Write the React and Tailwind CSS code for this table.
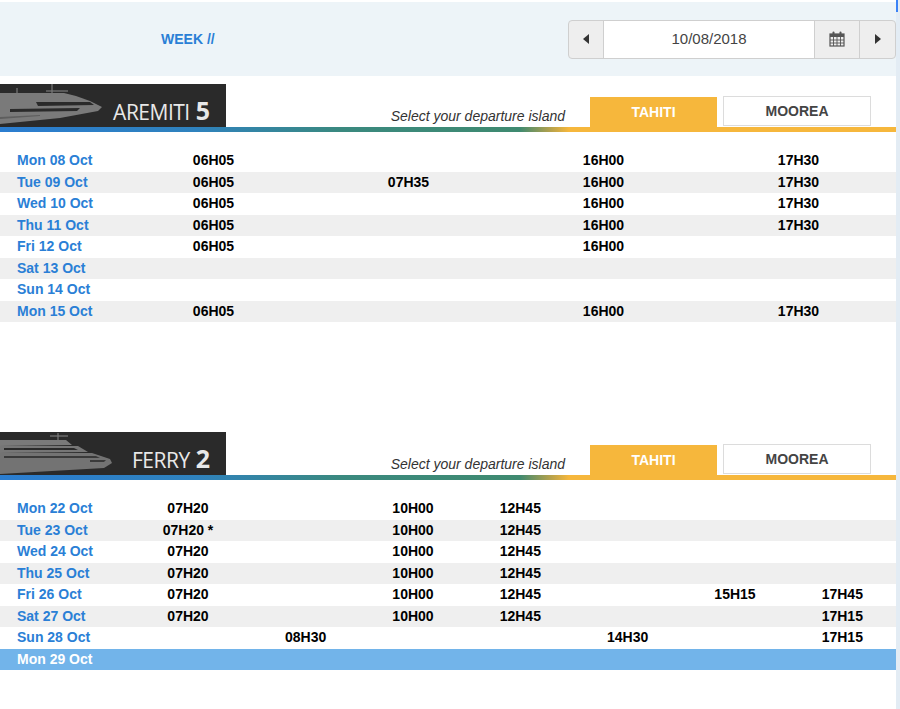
import React from 'react';

const aremitiRows = [
  ['Mon 08 Oct', '06H05', '', '16H00', '17H30'],
  ['Tue 09 Oct', '06H05', '07H35', '16H00', '17H30'],
  ['Wed 10 Oct', '06H05', '', '16H00', '17H30'],
  ['Thu 11 Oct', '06H05', '', '16H00', '17H30'],
  ['Fri 12 Oct', '06H05', '', '16H00', ''],
  ['Sat 13 Oct', '', '', '', ''],
  ['Sun 14 Oct', '', '', '', ''],
  ['Mon 15 Oct', '06H05', '', '16H00', '17H30'],
];

const ferryRows = [
  ['Mon 22 Oct', '07H20', '', '10H00', '12H45', '', '', ''],
  ['Tue 23 Oct', '07H20 *', '', '10H00', '12H45', '', '', ''],
  ['Wed 24 Oct', '07H20', '', '10H00', '12H45', '', '', ''],
  ['Thu 25 Oct', '07H20', '', '10H00', '12H45', '', '', ''],
  ['Fri 26 Oct', '07H20', '', '10H00', '12H45', '', '15H15', '17H45'],
  ['Sat 27 Oct', '07H20', '', '10H00', '12H45', '', '', '17H15'],
  ['Sun 28 Oct', '', '08H30', '', '', '14H30', '', '17H15'],
  ['Mon 29 Oct', '', '', '', '', '', '', '', true],
];

const YachtShape = () => (
  <svg width="106" height="43" viewBox="0 0 106 43">
    <line x1="17" y1="4" x2="17" y2="10" stroke="#7a7a7a" strokeWidth="1.2" />
    <line x1="52" y1="0" x2="52" y2="9" stroke="#7a7a7a" strokeWidth="1.2" />
    <line x1="46" y1="7" x2="68" y2="7" stroke="#7a7a7a" strokeWidth="1.2" />
    <path d="M0 9 L64 9 L76 12 L90 17 L102 23 L98 27 L60 34 L0 40 Z" fill="#7a7a7a" />
    <path d="M36 18 L90 18 L94 21 L38 22 Z" fill="#2a2a2a" />
    <path d="M10 25 L80 24 L77 27 L10 28 Z" fill="#2a2a2a" />
    <path d="M0 33 L40 31 L40 32 L0 35 Z" fill="#5e5e5e" />
  </svg>
);

const FerryShape = () => (
  <svg width="116" height="43" viewBox="0 0 116 43">
    <line x1="58" y1="1" x2="58" y2="8" stroke="#7a7a7a" strokeWidth="1.2" />
    <line x1="50" y1="4" x2="68" y2="4" stroke="#7a7a7a" strokeWidth="1.2" />
    <path d="M0 8 L66 8 L72 13 L0 14 Z" fill="#7a7a7a" />
    <path d="M0 14 L78 14 L88 20 L0 21 Z" fill="#767676" />
    <path d="M0 21 L92 21 L110 27 L112 31 L104 36 L0 42 Z" fill="#737373" />
    <path d="M4 16 L74 16 L78 18 L4 18 Z" fill="#2a2a2a" />
    <path d="M4 24 L96 24 L100 26 L4 26 Z" fill="#3a3a3a" />
    <path d="M90 28 L106 28 L104 30 L90 30 Z" fill="#3a3a3a" />
  </svg>
);

const Logo = ({ name, num, ship }) => (
  <div className="flex h-[43px] w-[226px] items-end bg-[#2a2a2a]">
    {ship}
    <div className="ml-auto flex items-baseline pb-[4px] pr-[16px] font-['Open_Sans',sans-serif] leading-none text-[#e8e8e8]">
      <span className="text-[21px] tracking-[-0.5px]">{name}</span>
      <span className="ml-[6px] text-[25px] font-bold">{num}</span>
    </div>
  </div>
);

const SectionHead = ({ name, num, ship }) => (
  <div>
    <div className="flex items-end">
      <Logo name={name} num={num} ship={ship} />
      <div className="flex flex-1 items-end justify-end pr-[25px]">
        <span className="mr-[25px] pb-[3px] text-[14px] italic leading-4 text-[#333]">
          Select your departure island
        </span>
        <div className="flex h-[30px] w-[127px] items-center justify-center bg-[#f6b73c] text-[14px] font-bold text-white">
          TAHITI
        </div>
        <div className="mb-[1px] ml-[6px] flex h-[30px] w-[148px] items-center justify-center border border-[#dcdcdc] bg-white text-[14px] font-bold text-[#444]">
          MOOREA
        </div>
      </div>
    </div>
    <div className="h-[5px] bg-[linear-gradient(to_right,#2b7dd0_0%,#2f82bd_22%,#3a897f_38%,#3f8a70_58%,#b7a24c_61.5%,#f6b73c_63.5%,#f6b73c_100%)]" />
  </div>
);

const Table = ({ rows, cols }) => (
  <div className="mt-[18px]">
    {rows.map((r, i) => {
      const hl = r[r.length - 1] === true;
      const cells = hl ? r.slice(0, -1) : r;
      return (
        <div
          key={i}
          className={`grid h-[21.5px] items-center ${cols} ${
            hl ? 'bg-[#72b4ea]' : i % 2 ? 'bg-[#efefef]' : 'bg-white'
          }`}
        >
          <span className={`pl-[17px] text-[14px] font-bold ${hl ? 'text-white' : 'text-[#2a7fd6]'}`}>
            {cells[0]}
          </span>
          {cells.slice(1).map((t, j) => (
            <span key={j} className="text-center text-[14px] font-bold text-black">
              {t}
            </span>
          ))}
        </div>
      );
    })}
  </div>
);

export default function App() {
  return (
    <div className="flex min-h-[709px] bg-white font-['Liberation_Sans',Arial,sans-serif]">
      <div className="w-[896px] pt-[2px]">
        <div className="flex h-[74px] items-center bg-[#edf4f8]">
          <span className="pl-[161px] text-[14px] font-bold text-[#2a7fd6]">WEEK //</span>
          <div className="ml-auto flex h-[39px] w-[328px] overflow-hidden rounded-[4px] border border-[#cfcfcf] bg-[#eeeeee]">
            <button className="flex w-[35px] items-center justify-center border-r border-[#cfcfcf]">
              <svg width="6" height="10" viewBox="0 0 6 10"><path d="M6 0 L0 5 L6 10 Z" fill="#333" /></svg>
            </button>
            <div className="flex flex-1 items-center justify-center bg-white text-[15px] text-[#444]">10/08/2018</div>
            <button className="flex w-[46px] items-center justify-center border-l border-r border-[#cfcfcf]">
              <svg width="16" height="16" viewBox="0 0 16 16">
                <rect x="1" y="3" width="14" height="12" fill="none" stroke="#555" strokeWidth="1.2" />
                <rect x="1" y="3" width="14" height="3" fill="#555" />
                <rect x="3.5" y="0.5" width="2" height="4" rx="1" fill="#555" />
                <rect x="10.5" y="0.5" width="2" height="4" rx="1" fill="#555" />
                <path d="M4.5 6 V15 M8 6 V15 M11.5 6 V15 M1 9 H15 M1 12 H15" stroke="#555" strokeWidth="0.9" />
              </svg>
            </button>
            <button className="flex w-[35px] items-center justify-center">
              <svg width="6" height="10" viewBox="0 0 6 10"><path d="M0 0 L6 5 L0 10 Z" fill="#333" /></svg>
            </button>
          </div>
        </div>

        <div className="mt-[8px]">
          <SectionHead name="AREMITI" num="5" ship={<YachtShape />} />
          <Table rows={aremitiRows} cols="grid-cols-[116px_repeat(4,195px)]" />
        </div>

        <div className="mt-[110px]">
          <SectionHead name="FERRY" num="2" ship={<FerryShape />} />
          <Table rows={ferryRows} cols="grid-cols-[124px_128px_repeat(6,107.33px)]" />
        </div>
      </div>
      <div className="flex w-[4px] flex-col bg-[#e3ecf4]">
        <div className="h-[12px] w-[2px] bg-[#3b82f6]" />
      </div>
    </div>
  );
}
